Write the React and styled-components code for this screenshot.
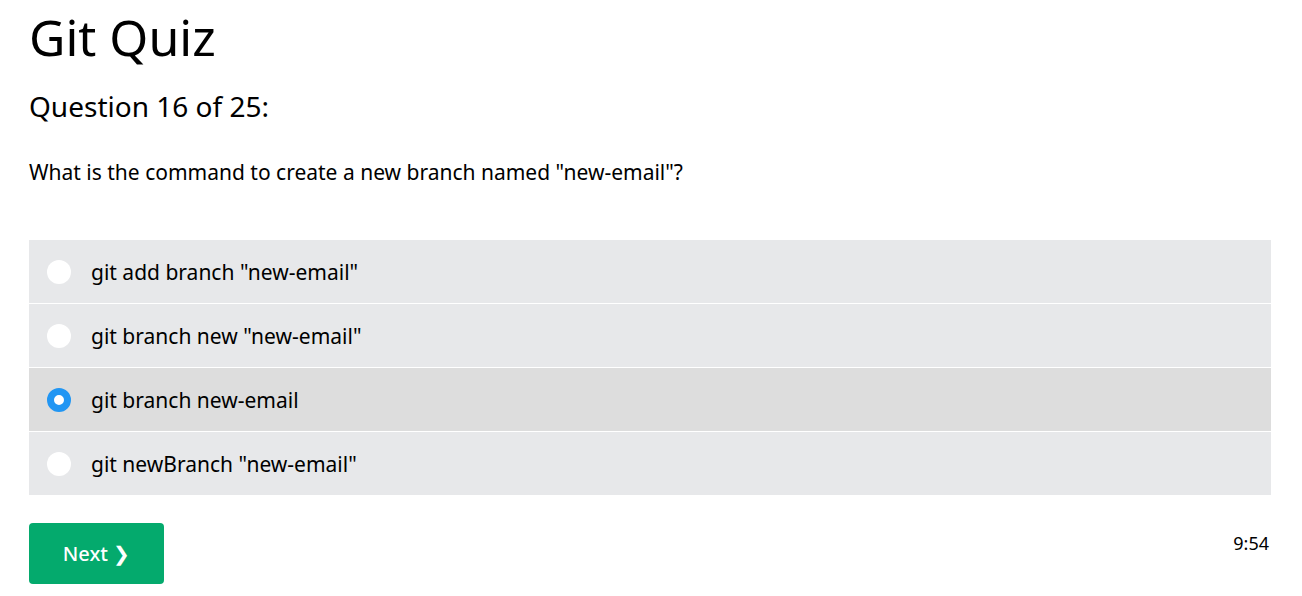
import React, { useState } from 'react';
import styled, { createGlobalStyle } from 'styled-components';

const GlobalStyle = createGlobalStyle`
  body {
    margin: 0;
    background: #ffffff;
    color: #000000;
    font-family: "Noto Sans", "Open Sans", sans-serif;
  }
`;

const Page = styled.div`
  padding: 0 31px 0 29px;
`;

const Title = styled.h1`
  margin: 0;
  padding-top: 5px;
  font-size: 50px;
  font-weight: 400;
  line-height: 64px;
`;

const QuestionCount = styled.h2`
  margin: 19px 0 0;
  font-size: 28px;
  font-weight: 400;
  line-height: 36px;
`;

const QuestionText = styled.p`
  margin: 34px 0 0;
  font-size: 21px;
  line-height: 28px;
`;

const Options = styled.div`
  margin-top: 54px;
  display: flex;
  flex-direction: column;
  gap: 1px;
`;

const Option = styled.label`
  display: flex;
  align-items: center;
  height: 63px;
  padding: 0 18px;
  gap: 20px;
  background: ${p => (p.$checked ? '#dddddd' : '#e7e8ea')};
  font-size: 21px;
  cursor: pointer;
`;

const Radio = styled.span`
  box-sizing: border-box;
  width: 24px;
  height: 24px;
  border-radius: 50%;
  flex: none;
  background: #ffffff;
  border: ${p => (p.$checked ? '7px solid #2196f3' : 'none')};
`;

const Footer = styled.div`
  margin-top: 28px;
  display: flex;
  justify-content: space-between;
  align-items: flex-start;
`;

const NextButton = styled.button`
  width: 135px;
  height: 61px;
  border: none;
  border-radius: 4px;
  background: #04aa6d;
  color: #ffffff;
  font-family: "Noto Sans", "Open Sans", sans-serif;
  font-size: 20px;
  font-weight: 500;
  cursor: pointer;
`;

const Timer = styled.div`
  margin-top: 8px;
  margin-right: 2px;
  font-size: 18px;
`;

const answers = [
  'git add branch "new-email"',
  'git branch new "new-email"',
  'git branch new-email',
  'git newBranch "new-email"',
];

export default function App() {
  const [picked, setPicked] = useState(2);
  return (
    <Page>
      <GlobalStyle />
      <Title>Git Quiz</Title>
      <QuestionCount>Question 16 of 25:</QuestionCount>
      <QuestionText>What is the command to create a new branch named "new-email"?</QuestionText>
      <Options>
        {answers.map((a, i) => (
          <Option key={a} $checked={picked === i} onClick={() => setPicked(i)}>
            <Radio $checked={picked === i} />
            {a}
          </Option>
        ))}
      </Options>
      <Footer>
        <NextButton>Next ❯</NextButton>
        <Timer>9:54</Timer>
      </Footer>
    </Page>
  );
}
